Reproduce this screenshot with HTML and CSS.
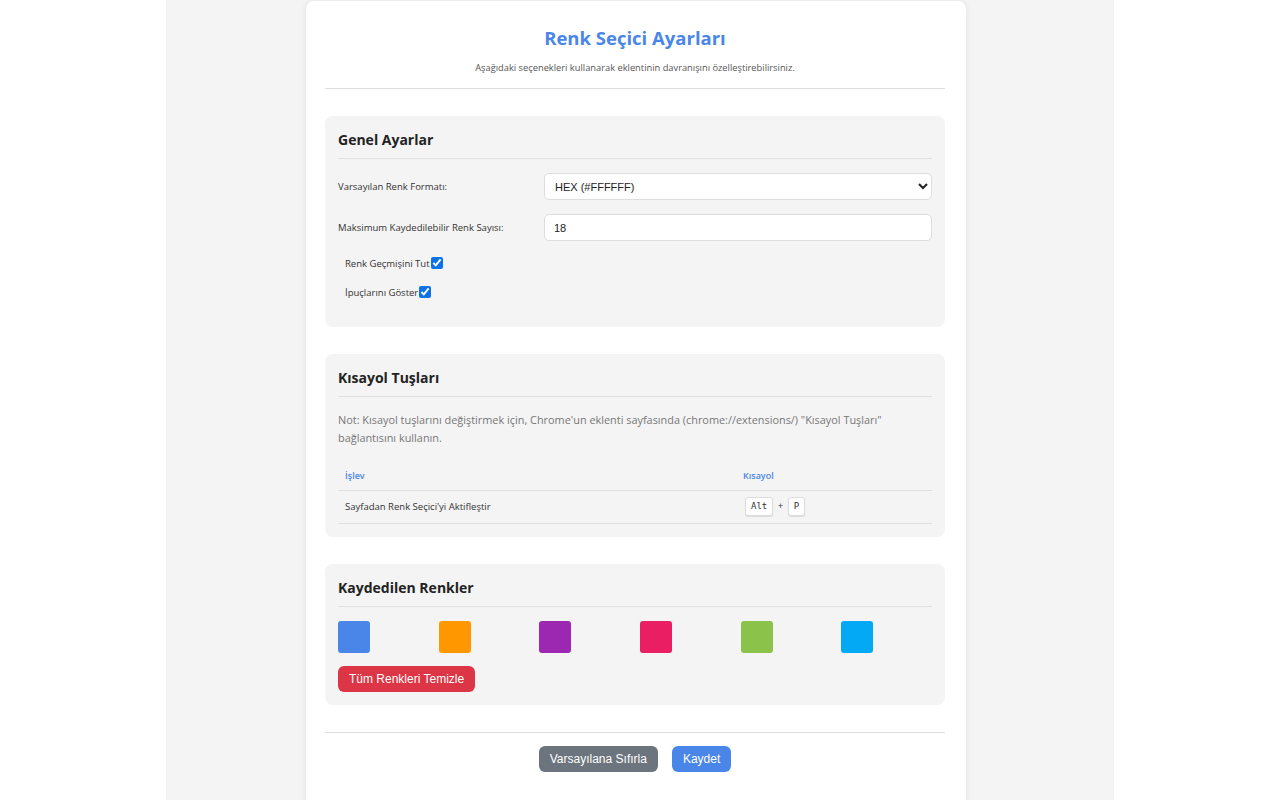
FILE: index.html
```html
<!DOCTYPE html>
<html lang="tr">
<head>
    <meta charset="UTF-8">
    <meta name="viewport" content="width=device-width, initial-scale=1.0">
    <title>Renk Seçici Ayarları</title>
    <link rel="stylesheet" href="styles.css">
</head>
<body>

    <div class="page">
        <div class="container">
            <header class="header">
                <h1>Renk Seçici Ayarları</h1>
                <p>Aşağıdaki seçenekleri kullanarak eklentinin davranışını özelleştirebilirsiniz.</p>
            </header>

            <!-- Genel ayarlar -->
            <section class="section">
                <h2>Genel Ayarlar</h2>

                <div class="form-row">
                    <label for="format">Varsayılan Renk Formatı:</label>
                    <select id="format">
                        <option>HEX (#FFFFFF)</option>
                        <option>RGB (255, 255, 255)</option>
                        <option>HSL (0, 0%, 100%)</option>
                    </select>
                </div>

                <div class="form-row">
                    <label for="max-colors">Maksimum Kaydedilebilir Renk Sayısı:</label>
                    <input type="number" id="max-colors" value="18">
                </div>

                <div class="check-row">
                    <label for="history">Renk Geçmişini Tut</label><input type="checkbox" id="history" checked>
                </div>

                <div class="check-row">
                    <label for="tooltips">İpuçlarını Göster</label><input type="checkbox" id="tooltips" checked>
                </div>
            </section>

            <!-- Kısayollar -->
            <section class="section">
                <h2>Kısayol Tuşları</h2>

                <p class="note">Not: Kısayol tuşlarını değiştirmek için, Chrome'un eklenti sayfasında (chrome://extensions/) "Kısayol Tuşları" bağlantısını kullanın.</p>

                <table class="shortcuts">
                    <thead>
                        <tr>
                            <th>İşlev</th>
                            <th>Kısayol</th>
                        </tr>
                    </thead>
                    <tbody>
                        <tr>
                            <td>Sayfadan Renk Seçici'yi Aktifleştir</td>
                            <td><kbd>Alt</kbd> + <kbd>P</kbd></td>
                        </tr>
                    </tbody>
                </table>
            </section>

            <!-- Kaydedilen renkler -->
            <section class="section">
                <h2>Kaydedilen Renkler</h2>

                <div class="swatches">
                    <div class="swatch" style="background: #4a86e8;"></div>
                    <div class="swatch" style="background: #ff9800;"></div>
                    <div class="swatch" style="background: #9c27b0;"></div>
                    <div class="swatch" style="background: #e91e63;"></div>
                    <div class="swatch" style="background: #8bc34a;"></div>
                    <div class="swatch" style="background: #03a9f4;"></div>
                </div>

                <button class="btn btn-danger">Tüm Renkleri Temizle</button>
            </section>

            <div class="actions">
                <button class="btn btn-secondary">Varsayılana Sıfırla</button>
                <button class="btn btn-primary">Kaydet</button>
            </div>
        </div>
    </div>

</body>
</html>
```

FILE: styles.css
```css
* {
    box-sizing: border-box;
}

body {
    margin: 0;
    background: #ffffff;
    font-family: 'Open Sans', 'Noto Sans', sans-serif;
    color: #333;
}

.page {
    max-width: 948px;
    min-height: 100vh;
    margin: 0 auto;
    background: #f4f4f4;
    padding: 1px 8px 0 0;
}

.container {
    width: 660px;
    margin: 0 auto;
    background: #ffffff;
    border-radius: 8px;
    box-shadow: 0 0 6px rgba(0, 0, 0, 0.08);
    padding: 18px 21px 40px 19px;
    min-height: 820px;
}

.header {
    text-align: center;
    border-bottom: 1px solid #ddd;
    padding-bottom: 13px;
}

.header h1 {
    margin: 7px 0 0;
    font-size: 18.5px;
    line-height: 24px;
    font-weight: 700;
    color: #4a86e8;
}

.header p {
    margin: 11px 0 0;
    font-size: 9.3px;
    line-height: 14px;
    color: #555;
}

.section {
    background: #f4f4f4;
    border-radius: 8px;
    padding: 15px 13px 13px;
    margin-top: 27px;
}

.section h2 {
    margin: 0 0 14px;
    padding-bottom: 9px;
    border-bottom: 1px solid #e0e0e0;
    font-size: 14px;
    line-height: 18px;
    font-weight: 700;
    color: #222;
}

/* Label + control rows */
.form-row {
    display: flex;
    align-items: center;
    margin-bottom: 14px;
}

.form-row label {
    width: 206px;
    flex-shrink: 0;
    font-size: 9.5px;
    color: #333;
}

.form-row select,
.form-row input {
    flex: 1;
    height: 27px;
    padding: 0 9px;
    border: 1px solid #ddd;
    border-radius: 5px;
    background: #fff;
    font-family: 'Liberation Sans', Arial, sans-serif;
    font-size: 11px;
    color: #222;
}

.form-row select {
    padding-left: 6px;
}

.form-row input::-webkit-inner-spin-button {
    display: none;
}

.check-row {
    display: flex;
    align-items: center;
    height: 16px;
    padding-left: 7px;
    margin-bottom: 13px;
}

.check-row:last-child {
    margin-bottom: 14px;
}

.check-row label {
    font-size: 9.5px;
    color: #333;
}

.check-row input {
    width: 12px;
    height: 12px;
    margin: 0 0 0 1px;
    accent-color: #0b72e7;
}

.note {
    margin: 0 0 14px;
    font-size: 10.9px;
    line-height: 18px;
    color: #777;
}

/* Shortcut table */
.shortcuts {
    width: 100%;
    border-collapse: collapse;
}

.shortcuts th {
    text-align: left;
    font-size: 9px;
    font-weight: 600;
    color: #4a86e8;
    padding: 0 7px;
    height: 29px;
    border-bottom: 1px solid #e0e0e0;
}

.shortcuts th:first-child {
    width: 398px;
}

.shortcuts td {
    font-size: 9.5px;
    color: #333;
    padding: 0 7px;
    height: 33px;
    border-bottom: 1px solid #e0e0e0;
}

kbd {
    display: inline-block;
    background: #fff;
    border: 1px solid #ddd;
    border-radius: 3px;
    box-shadow: 0 1px 1px rgba(0, 0, 0, 0.1);
    padding: 2px 5px;
    font-family: 'DejaVu Sans Mono', 'Liberation Mono', monospace;
    font-size: 9px;
    line-height: 13px;
    color: #333;
    margin: 0 2px;
}

/* Saved colours */
.swatches {
    display: grid;
    grid-template-columns: repeat(6, 1fr);
    gap: 10px;
    margin-bottom: 13px;
}

.swatch {
    width: 32px;
    height: 32px;
    border-radius: 3px;
}

.btn {
    border: none;
    border-radius: 6px;
    height: 26px;
    padding: 0 11px;
    font-family: 'Liberation Sans', Arial, sans-serif;
    font-size: 12px;
    color: #fff;
    cursor: pointer;
}

.btn-danger {
    background: #dc3545;
}

.btn-secondary {
    background: #6c757d;
}

.btn-primary {
    background: #4a86e8;
}

.actions {
    display: flex;
    justify-content: center;
    gap: 14px;
    margin-top: 27px;
    padding-top: 13px;
    border-top: 1px solid #ddd;
}
```
